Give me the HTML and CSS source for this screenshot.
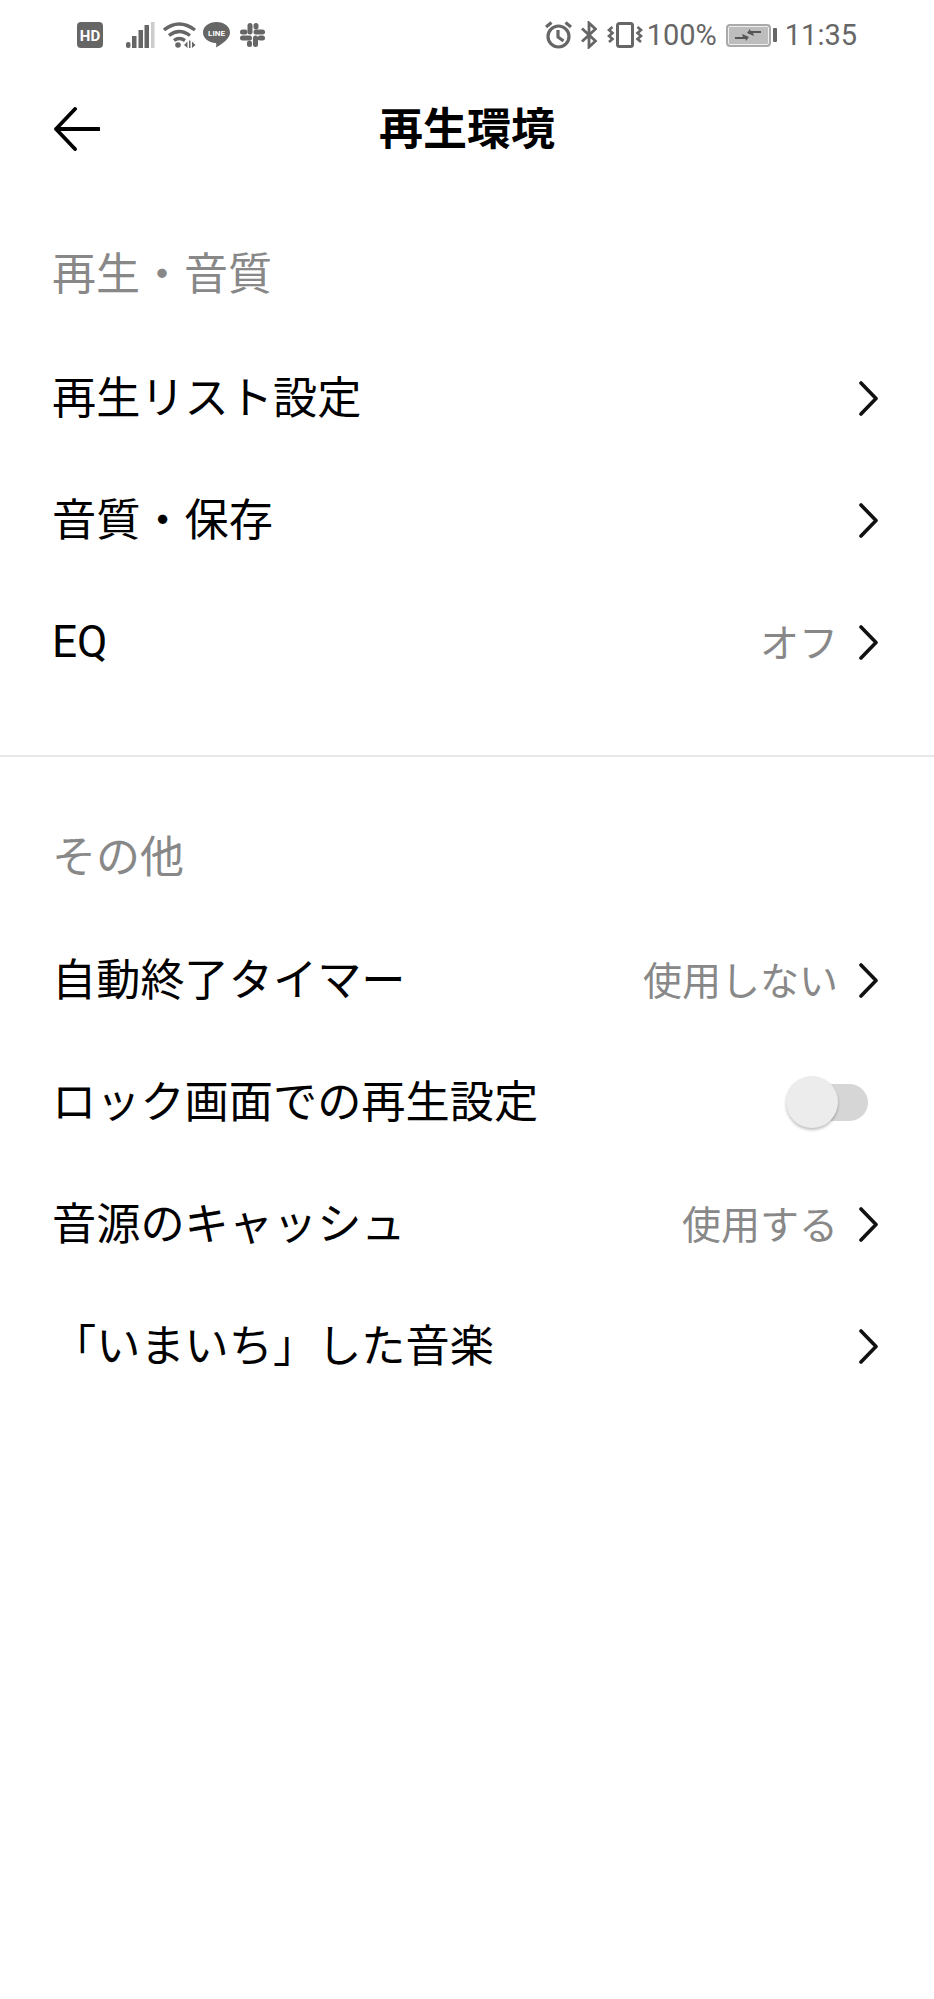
FILE: index.html
```html
<!DOCTYPE html>
<html lang="ja">
<head>
    <meta charset="UTF-8">
    <meta name="viewport" content="width=device-width, initial-scale=1.0">
    <title>再生環境</title>
    <link rel="stylesheet" href="styles.css">
</head>
<body>
    <svg class="defs" width="0" height="0">
        <symbol id="chevron" viewBox="0 0 19 35">
            <path d="M2 2 L17 17.5 L2 33" fill="none" stroke="#111" stroke-width="3.6" stroke-linecap="round" stroke-linejoin="round"/>
        </symbol>
    </svg>

    <div class="status-bar">
        <div class="status-left">
            <svg class="ic-hd" width="26" height="26" viewBox="0 0 26 26">
                <rect width="26" height="26" rx="4" fill="#666"/>
                <text x="13" y="18.5" text-anchor="middle" class="hd-text">HD</text>
            </svg>
            <svg class="ic-signal" width="29" height="26" viewBox="0 0 29 26">
                <rect x="0" y="20" width="4.500" height="6" rx="2" fill="#666"/>
                <rect x="6" y="14" width="4.500" height="12" fill="#666"/>
                <rect x="12.500" y="8" width="4.500" height="18" fill="#666"/>
                <rect x="18.500" y="3" width="4.500" height="23" fill="#666"/>
                <rect x="25" y="0" width="3.500" height="26" fill="#ccc"/>
            </svg>
            <svg class="ic-wifi" width="33" height="26" viewBox="0 0 33 26">
                <g fill="none" stroke="#666" stroke-width="3.400">
                    <path d="M1 8 Q16 -4 32 8"/>
                    <path d="M6 13.500 Q16 5.500 27 13.500"/>
                    <path d="M11 18.500 Q16 14.500 22 18.500"/>
                </g>
                <circle cx="15" cy="23" r="2.800" fill="#666"/>
                <path d="M21 23 L24.500 19.500 V26 Z M29 19.500 L32.500 23 L29 26 Z" fill="#666"/>
                <rect x="26" y="18.500" width="1.500" height="7.500" fill="#666"/>
            </svg>
            <svg class="ic-line" width="27" height="26" viewBox="0 0 27 26">
                <path d="M13.500 0 C21 0 27 4.500 27 10.500 C27 16.500 20 21.500 13 25.500 C13.500 23 13.500 21 12.500 21 C5.500 20.500 0 16.500 0 10.500 C0 4.500 6 0 13.500 0 Z" fill="#666"/>
                <text x="13.500" y="14" text-anchor="middle" class="line-text">LINE</text>
            </svg>
            <svg class="ic-slack" width="25" height="24" viewBox="0 0 25 24" fill="none" stroke="#666" stroke-width="5" stroke-linecap="round">
                <path d="M10 2.500 V9"/>
                <path d="M2.500 9 H5"/>
                <path d="M22.500 9 H16"/>
                <path d="M16 2.500 V4"/>
                <path d="M15.500 21.500 V15"/>
                <path d="M22.500 15 H20"/>
                <path d="M2.500 15 H9.500"/>
                <path d="M9.500 21.500 V20"/>
            </svg>
        </div>
        <div class="status-right">
            <svg class="ic-alarm" width="27" height="28" viewBox="0 0 27 28" fill="none" stroke="#666" stroke-width="3.200">
                <circle cx="13.500" cy="15.500" r="10.500"/>
                <path d="M13 9 V16 L18.500 20"/>
                <path d="M1 6 L6.500 1.500"/>
                <path d="M26 6 L20.500 1.500"/>
            </svg>
            <svg class="ic-bt" width="16" height="28" viewBox="0 0 16 28" fill="none" stroke="#666" stroke-width="2.800">
                <path d="M1 7.500 L14.500 20 L8 26 V2 L14.500 8 L1 20.500"/>
            </svg>
            <svg class="ic-vibrate" width="36" height="26" viewBox="0 0 36 26" fill="none" stroke="#666">
                <rect x="10.500" y="1.500" width="15" height="23" rx="2" stroke-width="3"/>
                <path d="M5.500 5 L2 8 L5.500 11 L2 14 L5.500 17 L2 20" stroke-width="2.600"/>
                <path d="M30.500 5 L34 8 L30.500 11 L34 14 L30.500 17 L34 20" stroke-width="2.600"/>
            </svg>
            <span class="battery-pct">100%</span>
            <div class="battery">
                <div class="battery-body">
                    <svg width="28" height="14" viewBox="0 0 28 14">
                        <path d="M1 9 H9 L8 6 L15 9 L12 13 L11.500 11 H1 Z" fill="#555"/>
                        <path d="M27 5 H19 L20 8 L13 5 L16 1 L16.500 3 H27 Z" fill="#555"/>
                    </svg>
                </div>
                <div class="battery-tip"></div>
            </div>
            <span class="clock">11:35</span>
        </div>
    </div>

    <header class="top-bar">
        <svg class="back" width="46" height="44" viewBox="0 0 46 44">
            <path d="M21 2 L2 22 L21 42 M2 22 H45" fill="none" stroke="#000" stroke-width="3.800" stroke-linecap="round" stroke-linejoin="round"/>
        </svg>
        <h1 class="page-title">再生環境</h1>
    </header>

    <section class="group group-first">
        <h2 class="group-title">再生・音質</h2>
        <div class="row">
            <span class="row-label">再生リスト設定</span>
            <svg class="chevron"><use href="#chevron"/></svg>
        </div>
        <div class="row">
            <span class="row-label">音質・保存</span>
            <svg class="chevron"><use href="#chevron"/></svg>
        </div>
        <div class="row">
            <span class="row-label row-label-latin">EQ</span>
            <span class="row-value">オフ</span>
            <svg class="chevron"><use href="#chevron"/></svg>
        </div>
    </section>

    <section class="group">
        <h2 class="group-title">その他</h2>
        <div class="row">
            <span class="row-label">自動終了タイマー</span>
            <span class="row-value">使用しない</span>
            <svg class="chevron"><use href="#chevron"/></svg>
        </div>
        <div class="row">
            <span class="row-label">ロック画面での再生設定</span>
            <div class="toggle"><div class="toggle-thumb"></div></div>
        </div>
        <div class="row">
            <span class="row-label">音源のキャッシュ</span>
            <span class="row-value">使用する</span>
            <svg class="chevron"><use href="#chevron"/></svg>
        </div>
        <div class="row">
            <span class="row-label">「いまいち」した音楽</span>
            <svg class="chevron"><use href="#chevron"/></svg>
        </div>
    </section>
</body>
</html>
```

FILE: styles.css
```css
html, body {
    margin: 0;
    padding: 0;
}
body {
    width: 934px;
    height: 1999px;
    overflow: hidden;
    background-color: #fff;
    color: #000;
    font-family: Roboto, "Noto Sans CJK JP", sans-serif;
}
.defs {
    display: block;
    height: 0;
}

/* status bar */
.status-bar {
    height: 70px;
    display: flex;
    justify-content: space-between;
    align-items: center;
    padding: 0 77px;
    color: #666;
}
.status-left, .status-right {
    display: flex;
    align-items: center;
}
.ic-signal {
    margin-left: 23px;
}
.ic-wifi {
    margin-left: 8px;
}
.ic-line {
    margin-left: 7px;
}
.ic-slack {
    margin-left: 10px;
}
.hd-text {
    font-size: 15px;
    font-weight: 700;
    fill: #fff;
}
.line-text {
    font-size: 8px;
    font-weight: 700;
    fill: #fff;
}
.ic-bt {
    margin-left: 9px;
}
.ic-vibrate {
    margin-left: 10px;
}
.battery-pct {
    margin-left: 4px;
    font-size: 29px;
}
.battery {
    margin-left: 9px;
    display: flex;
    align-items: center;
}
.battery-body {
    width: 45px;
    height: 23px;
    box-sizing: border-box;
    border: 2px solid #aaa;
    border-radius: 4px;
    box-shadow: inset 0 0 0 1px #eee;
    background-color: #bdbdbd;
    display: flex;
    align-items: center;
    justify-content: center;
}
.battery-tip {
    width: 4px;
    height: 14px;
    margin-left: 2px;
    border-radius: 1px;
    background-color: #666;
}
.clock {
    margin-left: 8px;
    font-size: 29px;
}

/* top bar */
.top-bar {
    position: relative;
    height: 116px;
    display: flex;
    align-items: center;
    justify-content: center;
}
.back {
    position: absolute;
    left: 54px;
    top: 37px;
}
.page-title {
    margin: 0 0 5px;
    font-size: 44px;
    font-weight: 700;
}

/* settings groups */
.group {
    padding-top: 40px;
}
.group-first {
    padding-top: 28px;
    padding-bottom: 52px;
    border-bottom: 2px solid #e8e8e8;
}
.group-title {
    margin: 0;
    height: 122px;
    line-height: 122px;
    padding: 0 52px;
    font-size: 44px;
    font-weight: 400;
    color: #888;
}
.group-first .group-title {
    height: 123px;
}
.row {
    height: 122px;
    display: flex;
    align-items: center;
    padding: 0 56px 0 52px;
    font-size: 44.2px;
}
.row-label {
    flex: 1;
    padding-bottom: 6px;
}
.row-label-latin {
    padding-bottom: 0;
}
.row-value {
    color: #888;
    font-size: 39px;
    margin-right: 21px;
    padding-bottom: 5px;
}
.chevron {
    width: 19px;
    height: 35px;
}
.toggle {
    position: relative;
    width: 68px;
    height: 37px;
    margin-right: 10px;
    border-radius: 19px;
    background-color: #d6d6d6;
}
.toggle-thumb {
    position: absolute;
    left: -14px;
    top: -8px;
    width: 52px;
    height: 52px;
    border-radius: 50%;
    background-color: #ececec;
    box-shadow: 0 2px 3px rgba(0, 0, 0, 0.25);
}
```
